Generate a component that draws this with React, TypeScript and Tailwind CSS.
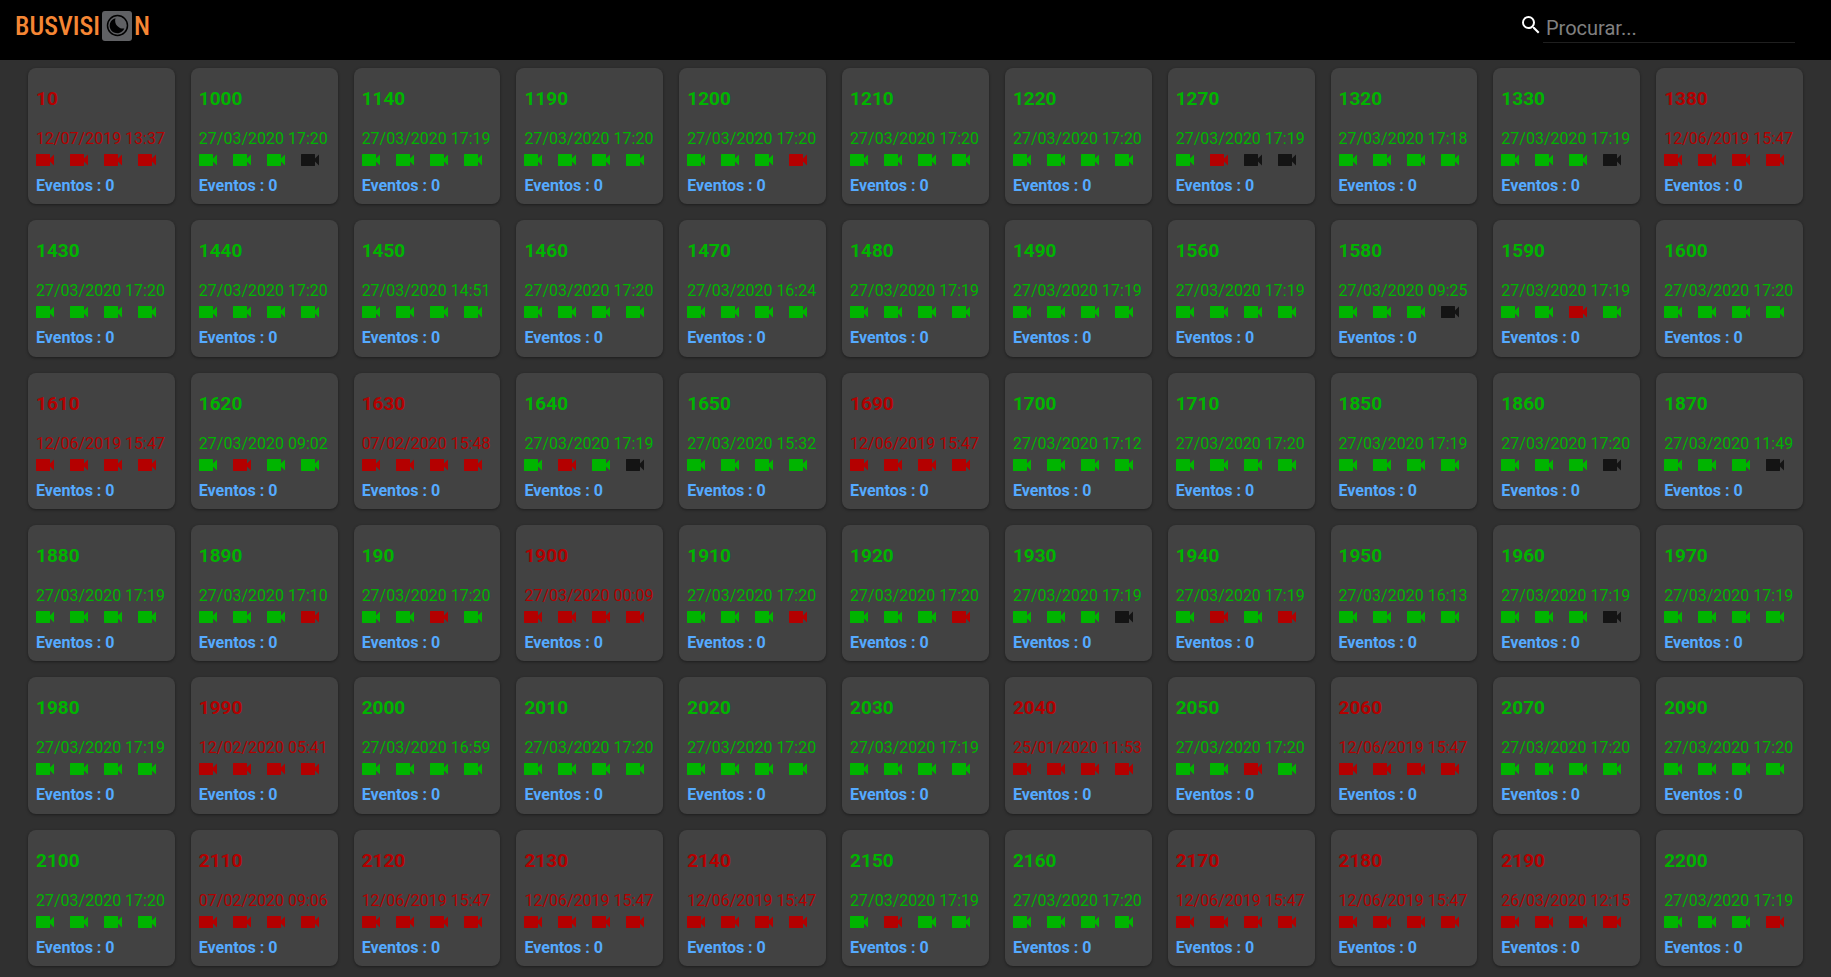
import React from 'react';
import { MdSearch } from 'react-icons/md';

type Status = 'g' | 'r' | 'k';

interface Vehicle {
  id: string;
  date: string;
  online: boolean;
  cams: Status[];
}

// id, last contact, camera states (g = ok, r = failure, k = disabled); "!" marks an offline vehicle
const rows = `
10|12/07/2019 13:37|rrrr|!
1000|27/03/2020 17:20|gggk
1140|27/03/2020 17:19|gggg
1190|27/03/2020 17:20|gggg
1200|27/03/2020 17:20|gggr
1210|27/03/2020 17:20|gggg
1220|27/03/2020 17:20|gggg
1270|27/03/2020 17:19|grkk
1320|27/03/2020 17:18|gggg
1330|27/03/2020 17:19|gggk
1380|12/06/2019 15:47|rrrr|!
1430|27/03/2020 17:20|gggg
1440|27/03/2020 17:20|gggg
1450|27/03/2020 14:51|gggg
1460|27/03/2020 17:20|gggg
1470|27/03/2020 16:24|gggg
1480|27/03/2020 17:19|gggg
1490|27/03/2020 17:19|gggg
1560|27/03/2020 17:19|gggg
1580|27/03/2020 09:25|gggk
1590|27/03/2020 17:19|ggrg
1600|27/03/2020 17:20|gggg
1610|12/06/2019 15:47|rrrr|!
1620|27/03/2020 09:02|grgg
1630|07/02/2020 15:48|rrrr|!
1640|27/03/2020 17:19|grgk
1650|27/03/2020 15:32|gggg
1690|12/06/2019 15:47|rrrr|!
1700|27/03/2020 17:12|gggg
1710|27/03/2020 17:20|gggg
1850|27/03/2020 17:19|gggg
1860|27/03/2020 17:20|gggk
1870|27/03/2020 11:49|gggk
1880|27/03/2020 17:19|gggg
1890|27/03/2020 17:10|gggr
190|27/03/2020 17:20|ggrg
1900|27/03/2020 00:09|rrrr|!
1910|27/03/2020 17:20|gggr
1920|27/03/2020 17:20|gggr
1930|27/03/2020 17:19|gggk
1940|27/03/2020 17:19|grgr
1950|27/03/2020 16:13|gggg
1960|27/03/2020 17:19|gggk
1970|27/03/2020 17:19|gggg
1980|27/03/2020 17:19|gggg
1990|12/02/2020 05:41|rrrr|!
2000|27/03/2020 16:59|gggg
2010|27/03/2020 17:20|gggg
2020|27/03/2020 17:20|gggg
2030|27/03/2020 17:19|gggg
2040|25/01/2020 11:53|rrrr|!
2050|27/03/2020 17:20|ggrg
2060|12/06/2019 15:47|rrrr|!
2070|27/03/2020 17:20|gggg
2090|27/03/2020 17:20|gggg
2100|27/03/2020 17:20|gggg
2110|07/02/2020 09:06|rrrr|!
2120|12/06/2019 15:47|rrrr|!
2130|12/06/2019 15:47|rrrr|!
2140|12/06/2019 15:47|rrrr|!
2150|27/03/2020 17:19|grgg
2160|27/03/2020 17:20|gggg
2170|12/06/2019 15:47|rrrr|!
2180|12/06/2019 15:47|rrrr|!
2190|26/03/2020 12:15|rrrr|!
2200|27/03/2020 17:19|gggr
`;

const vehicles: Vehicle[] = rows.trim().split('\n').map((row) => {
  const [id, date, cams, flag] = row.split('|');
  return { id, date, cams: cams.split('') as Status[], online: flag !== '!' };
});

const camColor: Record<Status, string> = {
  g: 'text-[#00b400]',
  r: 'text-[#b40000]',
  k: 'text-[#141414]',
};

const CamIcon: React.FC<{ className: string }> = ({ className }) => (
  <svg width="24" height="24" viewBox="0 0 24 24" fill="currentColor" className={className}>
    <path d="M17 10.5V6.4a.4.4 0 0 0-.4-.4H3.4a.4.4 0 0 0-.4.4v11.2c0 .22.18.4.4.4h13.2a.4.4 0 0 0 .4-.4v-4.1l4 4v-11l-4 4z" />
  </svg>
);

const Logo = () => (
  <a
    href="#"
    aria-label="BUSVISION"
    className="flex h-[30px] items-center gap-[2px] font-['Roboto_Condensed',sans-serif] text-[26px] leading-[30px] font-medium text-[#f58634]"
  >
    <span>BUSVISI</span>
    <svg width="30" height="30" viewBox="0 0 30 30">
      <rect width="30" height="30" rx="3" fill="#606164" />
      <circle cx="15.5" cy="14.5" r="10" fill="none" stroke="#000" strokeWidth="1.5" />
      <path d="M13.5 7.3a7.6 7.6 0 1 0 8.8 10.2a7.9 7.9 0 0 1-8.8-10.2z" fill="#000" />
    </svg>
    <span>N</span>
  </a>
);

const VehicleCard: React.FC<{ vehicle: Vehicle }> = ({ vehicle }) => (
  <article
    className={`rounded-lg bg-[#424242] px-2 shadow-[0_1px_3px_rgba(0,0,0,0.4)] ${vehicle.online ? 'text-[#00b400]' : 'text-[#b40000]'}`}
  >
    <h3 className="pt-5 text-[19px] leading-[22px] font-bold">{vehicle.id}</h3>
    <p className="pt-[19px] text-base leading-5 whitespace-nowrap">{vehicle.date}</p>
    <div className="-mt-px -ml-[3px] flex gap-[10px]">
      {vehicle.cams.map((cam, i) => (
        <CamIcon key={i} className={camColor[cam]} />
      ))}
    </div>
    <p className="pt-1 text-base leading-5 font-bold text-[#55aaff]">Eventos : 0</p>
  </article>
);

const App: React.FC = () => (
  <div className="flex min-h-screen flex-col bg-[#303030] font-[Roboto,sans-serif]">
    <header className="flex h-15 items-start justify-between bg-black pt-[11px] pr-9 pl-[15px]">
      <Logo />
      <label className="flex items-start">
        <MdSearch size={24} className="mt-[2px] text-white" />
        <input
          type="text"
          aria-label="Procurar"
          placeholder="Procurar..."
          className="h-8 w-[252px] border-b border-[#1f1f1f] bg-transparent px-[3px] pt-[2px] text-xl text-white outline-none placeholder:text-[#808080]"
        />
      </label>
    </header>
    <main className="grid flex-1 grid-cols-11 gap-4 px-7 pt-2 pb-[11px]">
      {vehicles.map((v) => (
        <VehicleCard key={v.id} vehicle={v} />
      ))}
    </main>
  </div>
);

export default App;
